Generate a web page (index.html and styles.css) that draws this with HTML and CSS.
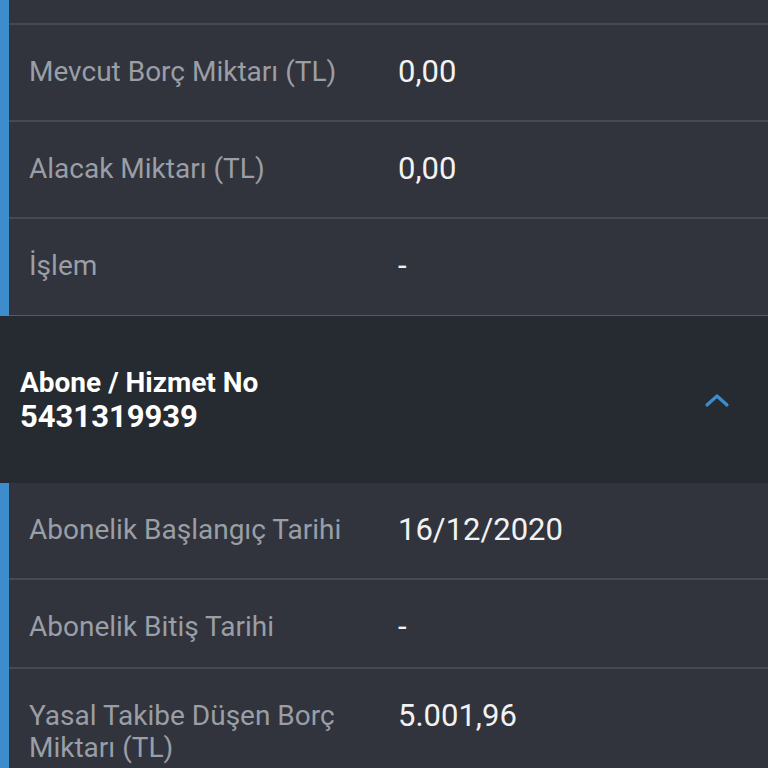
FILE: index.html
```html
<!DOCTYPE html>
<html lang="tr"><head>
<meta charset="utf-8">
<title>Abonelik Bilgileri</title>
<meta name="viewport" content="width=device-width, initial-scale=1.0">
<link rel="stylesheet" href="styles.css">
</head>
<body>
<div class="wrap">
  <div class="card">
    <div class="row top"></div>
    <div class="row">
      <div class="lbl">Mevcut Borç Miktarı (TL)</div>
      <div class="val">0,00</div>
    </div>
    <div class="row">
      <div class="lbl">Alacak Miktarı (TL)</div>
      <div class="val">0,00</div>
    </div>
    <div class="row last">
      <div class="lbl">İşlem</div>
      <div class="val">-</div>
    </div>
  </div>

  <div class="head">
    <div class="htext">
      <div class="htitle">Abone / Hizmet No</div>
      <div class="hno">5431319939</div>
    </div>
    <svg class="chev" width="26" height="16" viewBox="0 0 26 16"><path d="M3 13 L13 4 L23 13" fill="none" stroke="#3d8ccc" stroke-width="3.2" stroke-linecap="round" stroke-linejoin="round"/></svg>
  </div>

  <div class="card">
    <div class="row">
      <div class="lbl">Abonelik Başlangıç Tarihi</div>
      <div class="val">16/12/2020</div>
    </div>
    <div class="row short">
      <div class="lbl">Abonelik Bitiş Tarihi</div>
      <div class="val">-</div>
    </div>
    <div class="row">
      <div class="lbl">Yasal Takibe Düşen Borç Miktarı (TL)</div>
      <div class="val">5.001,96</div>
    </div>
  </div>
</div>
</body>
</html>
```

FILE: styles.css
```css
*,*::before,*::after {box-sizing: border-box;}
body {
  margin: 0;
  padding: 0;
  background: #31343c;
  font-family: Roboto, "Noto Sans", sans-serif;
  overflow: hidden;
}
.wrap {
  width: 768px;
}
.card {
  background: #31343c;
  border-left: 9px solid #3d8ccc;
}
.row {
  display: grid;
  grid-template-columns: 369px 1fr;
  padding: 31px 0 32px 20px;
  border-bottom: 2px solid #454952;
  min-height: 97px;
}
.row.top {
  min-height: 0;
  height: 25px;
  padding: 0;
}
.row.last {
  border-bottom: 2px solid #555962;
  min-height: 98px;
}
.row.short {
  min-height: 87px;
  padding-top: 31px;
  padding-bottom: 24px;
}
.lbl {
  font-size: 28px;
  line-height: 32px;
  color: #9a9ea6;
  padding-right: 14px;
}
.val {
  font-size: 31px;
  line-height: 32px;
  color: #f2f2f2;
}
.head {
  display: flex;
  align-items: center;
  justify-content: space-between;
  height: 167px;
  background: #262a31;
  padding: 0 38px 0 20px;
  margin-top: -1px;
}
.htext {
  color: #fff;
  font-weight: bold;
  margin-top: 2px;
}
.htitle {
  font-size: 28px;
  line-height: 32px;
}
.hno {
  font-size: 31px;
  line-height: 36px;
}
.chev {
  display: block;
}
```
